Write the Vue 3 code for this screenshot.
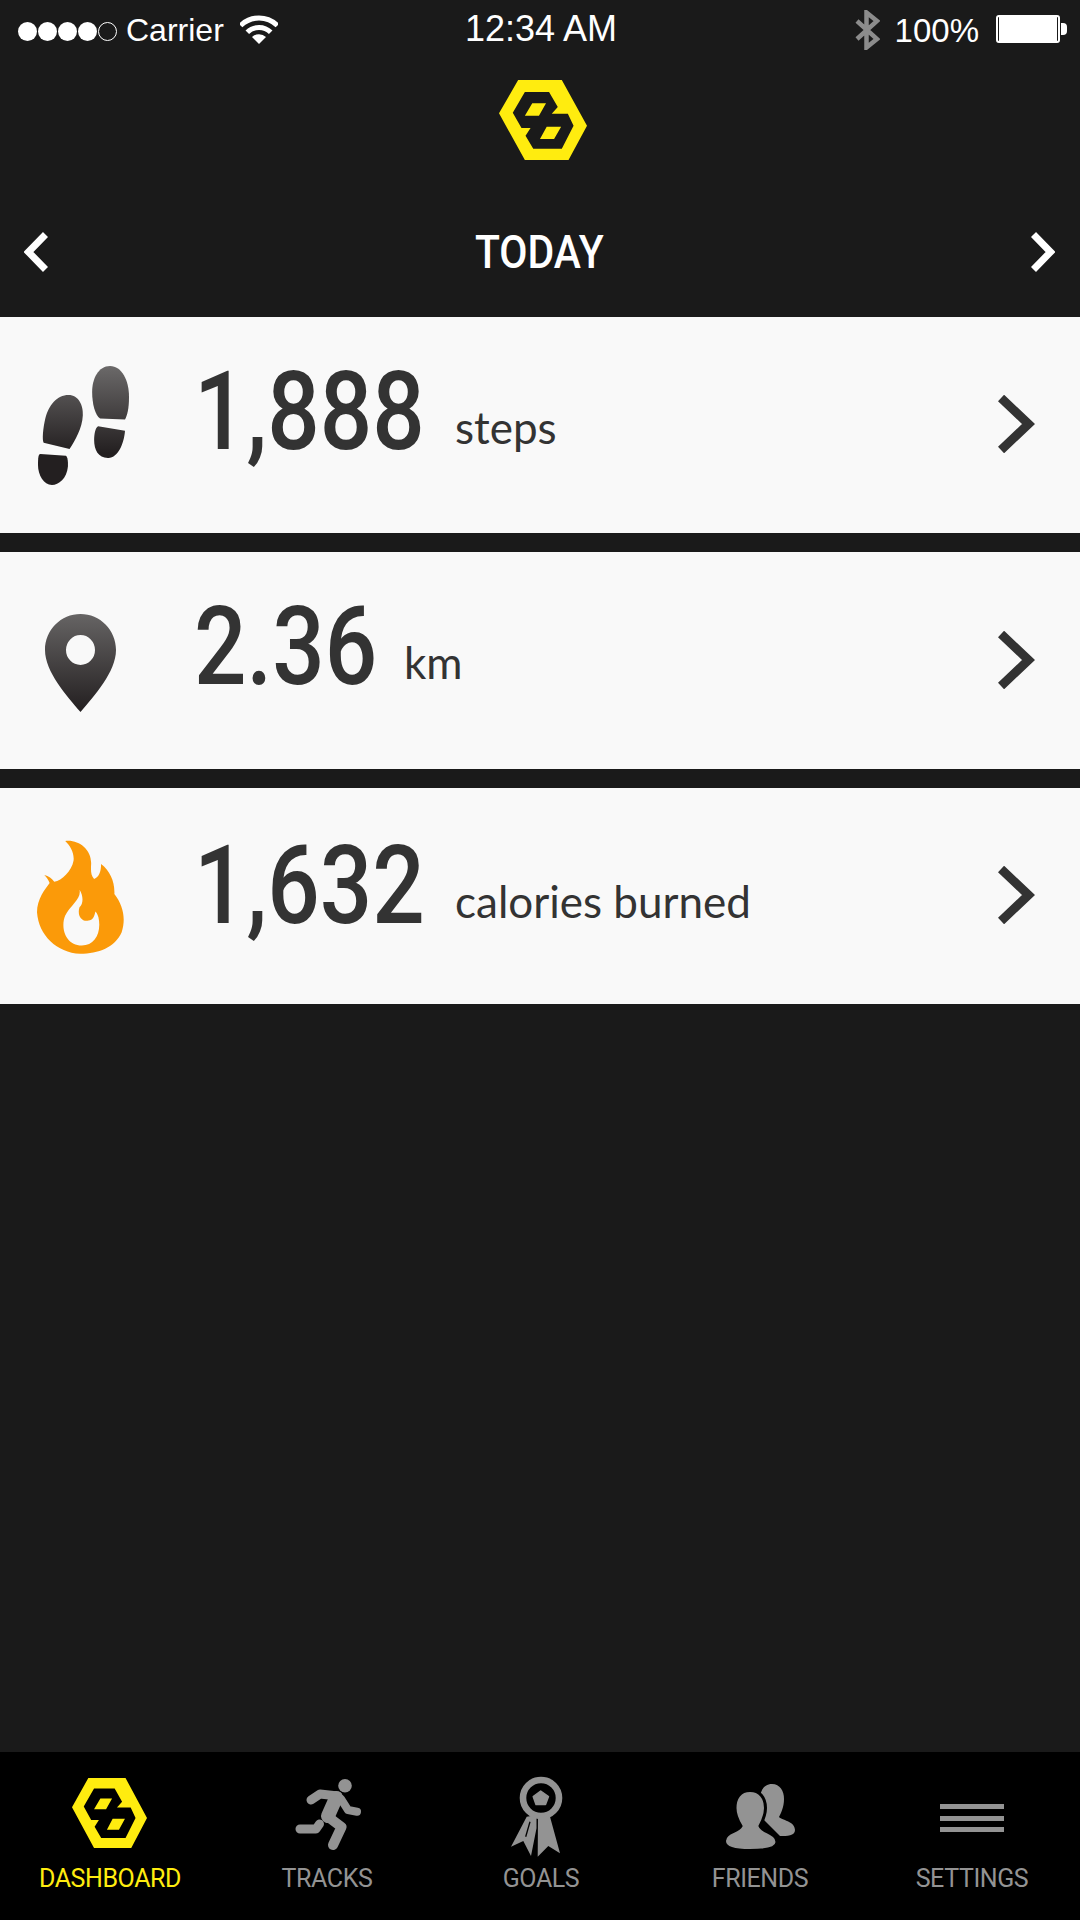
<script setup>
const logoPath =
  "M115 60L245 60L320 197L265 300L135 300L58 160Z" +
  "M135 96L99 158L125 204L152 204L137 227L160 266L245 266L280 197L263 161L215 161L233 141L207 96Z" +
  "M157 130L198 130L177 167L135 167Z" +
  "M200 200L243 200L222 237L180 237Z"

const rows = [
  { icon: "steps", value: "1,888", unit: "steps", valueWidth: 261, cls: "" },
  { icon: "pin", value: "2.36", unit: "km", valueWidth: 210, cls: "" },
  { icon: "flame", value: "1,632", unit: "calories burned", valueWidth: 261, cls: "row-low" }
]
</script>

<template>
  <div class="app">
    <div class="status">
      <div class="status-left">
        <div class="signal">
          <span class="dot"></span>
          <span class="dot"></span>
          <span class="dot"></span>
          <span class="dot"></span>
          <span class="dot dot-empty"></span>
        </div>
        <span class="carrier">Carrier</span>
        <svg class="wifi" viewBox="242 15 38 29" width="38" height="29">
          <path d="M242.6 25.6A26 26 0 0 1 279.4 25.6M249.3 32.3A16.5 16.5 0 0 1 272.7 32.3" fill="none" stroke="#fff" stroke-width="5" />
          <path d="M261 44L254 37A10 10 0 0 1 268 37Z" fill="#fff" />
        </svg>
      </div>
      <div class="time">12:34 AM</div>
      <div class="status-right">
        <svg class="bt" viewBox="855 10 25 40" width="25" height="40">
          <path d="M857 21L877 39L866.5 47.5V12.5L877 21L857 39" fill="none" stroke="#8c8c8c" stroke-width="4.5" />
        </svg>
        <span class="percent">100%</span>
        <div class="battery">
          <div class="battery-body"><div class="battery-fill"></div></div>
          <div class="battery-tip"></div>
        </div>
      </div>
    </div>

    <svg class="logo" viewBox="58 60 262 240" preserveAspectRatio="none">
      <path :d="logoPath" fill-rule="evenodd" fill="#ffec0f" />
    </svg>

    <div class="nav">
      <svg width="24" height="40" viewBox="0 0 24 40">
        <path d="M21.5 2.5L4.5 20L21.5 37.5" fill="none" stroke="#fff" stroke-width="7" />
      </svg>
      <span class="title">TODAY</span>
      <svg width="24" height="40" viewBox="0 0 24 40">
        <path d="M2.5 2.5L19.5 20L2.5 37.5" fill="none" stroke="#fff" stroke-width="7" />
      </svg>
    </div>

    <div class="rows">
      <div v-for="row in rows" :key="row.icon" class="row" :class="row.cls">
        <div class="row-icon">
          <svg v-if="row.icon === 'steps'" class="icon-steps" width="91" height="119" viewBox="53 47 274 358">
            <defs>
              <linearGradient id="stepsGrad" gradientUnits="userSpaceOnUse" x1="0" y1="47" x2="0" y2="310">
                <stop offset="0" stop-color="#6b6969" />
                <stop offset="1" stop-color="#231f20" />
              </linearGradient>
            </defs>
            <g fill="url(#stepsGrad)">
              <path d="M270 47C305 47 327 90 327 140C327 175 322 195 315 208L240 205C225 195 216 160 216 125C216 85 235 47 270 47Z" />
              <path d="M234 228L315 242C312 280 295 323 265 324C235 325 222 300 222 270C222 250 226 232 234 228Z" />
              <path d="M145 134C175 134 190 165 188 195C186 235 165 270 148 297L70 278C65 270 68 235 75 205C85 165 110 134 145 134Z" />
              <path d="M60 312L137 317C142 320 144 335 143 350C140 385 115 405 95 405C70 405 53 375 53 345C53 325 54 312 60 312Z" />
            </g>
          </svg>
          <svg v-else-if="row.icon === 'pin'" class="icon-pin" width="71" height="98" viewBox="45 614 71 98">
            <defs>
              <linearGradient id="pinGrad" gradientUnits="userSpaceOnUse" x1="0" y1="614" x2="0" y2="712">
                <stop offset="0" stop-color="#666464" />
                <stop offset="1" stop-color="#231f20" />
              </linearGradient>
            </defs>
            <path
              fill="url(#pinGrad)"
              fill-rule="evenodd"
              d="M80.5 614C100 614 116 630 116 650C116 672 94 696 80.5 712C67 696 45 672 45 650C45 630 61 614 80.5 614ZM80.5 635A14.5 15 0 0 0 80.5 665A14.5 15 0 0 0 80.5 635Z"
            />
          </svg>
          <svg v-else class="icon-flame" width="87" height="115" viewBox="50 30 262 345">
            <path
              fill="#fb9a09"
              fill-rule="evenodd"
              d="M135 35C175 30 215 60 213 105C212 125 212 140 222 150C238 145 243 125 243 105C270 125 285 160 283 195C310 230 318 270 305 310C285 355 235 375 180 375C110 372 55 320 50 250C50 210 75 180 88 162C85 155 80 145 72 138C85 140 95 150 102 158C125 155 155 125 160 95C163 70 150 50 135 35ZM178 182C185 210 150 230 135 260C120 295 135 350 185 350C225 350 245 310 235 265C232 255 228 250 226 248C222 265 218 275 205 275C185 280 170 260 178 235C190 225 190 200 178 182Z"
            />
          </svg>
        </div>
        <div class="row-text">
          <span class="value" :style="{ width: row.valueWidth + 'px' }">
            <span class="value-num">{{ row.value }}</span>
          </span>
          <span class="unit">{{ row.unit }}</span>
        </div>
        <svg class="row-chevron" width="37" height="58" viewBox="0 0 37 58">
          <path d="M3 3L30.5 29L3 55" fill="none" stroke="#333" stroke-width="9" />
        </svg>
      </div>
    </div>

    <div class="tabs">
      <div class="tab tab-active">
        <div class="tab-icon">
          <svg class="tab-logo" viewBox="58 60 262 240" preserveAspectRatio="none">
            <path :d="logoPath" fill-rule="evenodd" fill="#ffec0f" />
          </svg>
        </div>
        <span class="tab-label">DASHBOARD</span>
      </div>
      <div class="tab">
        <div class="tab-icon">
          <svg width="90" height="84" viewBox="282 1775 90 84">
            <circle cx="345" cy="1785.7" r="6.8" fill="#939393" />
            <g fill="none" stroke="#939393" stroke-width="9" stroke-linecap="round" stroke-linejoin="round">
              <path d="M311 1800L320 1794L338 1796" />
              <path d="M341 1799L348 1810L357 1811.7" stroke-width="8" />
              <path d="M327 1816L341.5 1827L333 1845" stroke-width="10" />
              <path d="M319.5 1824L316 1829L300 1829" />
              <path d="M336 1798L328 1816" stroke-width="14" />
            </g>
          </svg>
        </div>
        <span class="tab-label">TRACKS</span>
      </div>
      <div class="tab">
        <div class="tab-icon">
          <svg width="90" height="84" viewBox="496 1775 90 84">
            <circle cx="541" cy="1798" r="18" fill="none" stroke="#939393" stroke-width="6.6" />
            <path d="M540.7 1791L548.5 1796.5L545.5 1804.5H536L533.2 1796.5Z" fill="#939393" stroke="#939393" stroke-width="1.5" stroke-linejoin="round" />
            <path d="M526.7 1816.7L511 1846.7L523.3 1841L531 1856L536.5 1828.3L536.5 1815Z" fill="#939393" />
            <path d="M538 1815L537.7 1856.7L548.3 1846L560 1853.3L550 1816.7Z" fill="#939393" />
            <path d="M530 1821.7L525.7 1836.7" stroke="#000" stroke-width="1.3" />
          </svg>
        </div>
        <span class="tab-label">GOALS</span>
      </div>
      <div class="tab">
        <div class="tab-icon">
          <svg width="90" height="84" viewBox="715 1775 90 84">
            <path
              fill="#939393"
              d="M772 1784C780 1784 784 1791 784 1799C784 1807 781 1813 779 1817C781 1820 795 1821 795 1830C795 1836 787 1836 780 1836L764 1820C760 1812 760 1805 760 1799C760 1791 764 1784 772 1784Z"
            />
            <path
              fill="#939393"
              stroke="#000"
              stroke-width="3"
              d="M750 1790.5C760 1790.5 765.5 1798 765.5 1808C765.5 1816 762 1822 760 1826C762 1832 777 1833 777 1842C777 1849 764 1850.5 750 1850.5C737 1850.5 724.5 1849 724.5 1841C724.5 1832 738 1832 741 1826C738 1821 735 1816 735 1808C735 1798 740 1790.5 750 1790.5Z"
            />
          </svg>
        </div>
        <span class="tab-label">FRIENDS</span>
      </div>
      <div class="tab">
        <div class="tab-icon">
          <svg width="90" height="84" viewBox="927 1775 90 84">
            <path d="M940 1804H1004V1809H940ZM940 1816H1004V1821H940ZM940 1827H1004V1832H940Z" fill="#939393" />
          </svg>
        </div>
        <span class="tab-label">SETTINGS</span>
      </div>
    </div>
  </div>
</template>

<style scoped>
.app {
  width: 1080px;
  height: 1920px;
  background: #1a1a1a;
  display: flex;
  flex-direction: column;
  overflow: hidden;
  font-family: "Liberation Sans", Arial, sans-serif;
}

.status {
  height: 57px;
  display: grid;
  grid-template-columns: 1fr auto 1fr;
  color: #fff;
}

.status-left {
  display: flex;
  align-items: flex-start;
  padding-left: 18px;
}

.signal {
  display: flex;
  gap: 1px;
  margin-top: 22px;
}

.dot {
  width: 19px;
  height: 19px;
  border-radius: 50%;
  background: #fff;
  box-sizing: border-box;
}

.dot-empty {
  background: none;
  border: 1.5px solid #fff;
}

.carrier {
  font-size: 32px;
  line-height: 32px;
  margin-top: 14px;
  margin-left: 9px;
}

.wifi {
  margin-top: 15px;
  margin-left: 16px;
}

.time {
  font-size: 36px;
  line-height: 36px;
  margin-top: 11px;
  margin-left: 2px;
}

.status-right {
  display: flex;
  align-items: flex-start;
  justify-content: flex-end;
  padding-right: 13px;
}

.bt {
  margin-top: 10px;
}

.percent {
  font-size: 33px;
  line-height: 33px;
  margin-top: 14px;
  margin-left: 15px;
}

.battery {
  display: flex;
  align-items: center;
  margin-top: 15px;
  margin-left: 17px;
}

.battery-body {
  width: 64px;
  height: 28px;
  box-sizing: border-box;
  border: 2px solid #fff;
  border-radius: 3px;
  padding: 0 1px;
}

.battery-fill {
  height: 100%;
  background: #fff;
}

.battery-tip {
  width: 6px;
  height: 12px;
  margin-left: 1px;
  background: #fff;
  border-radius: 0 4px 4px 0;
}

.logo {
  width: 88px;
  height: 80px;
  margin: 23px 0 0 499px;
}

.nav {
  height: 40px;
  margin-top: 72px;
  padding: 0 25px 0 24px;
  display: flex;
  align-items: center;
  justify-content: space-between;
}

.title {
  font-family: Roboto, sans-serif;
  font-weight: 500;
  font-size: 46px;
  line-height: 40px;
  color: #fff;
  transform: scaleX(0.89);
}

.rows {
  margin-top: 45px;
  display: flex;
  flex-direction: column;
  gap: 19px;
}

.row {
  height: 216.4px;
  background: #f9f9f9;
  display: flex;
  align-items: center;
  padding: 0 45px 0 37px;
}

.row-icon {
  width: 87px;
  height: 120px;
  flex: none;
  margin-right: 70px;
  display: flex;
  align-items: center;
  justify-content: center;
}

.row-icon svg {
  flex: none;
}

.icon-steps {
  margin-left: 6px;
}

.icon-pin {
  margin-top: 5px;
}

.icon-flame {
  margin-top: 1px;
}

.row-text {
  align-self: flex-start;
  margin-top: 40px;
  display: flex;
  align-items: baseline;
  color: #333;
  white-space: nowrap;
}

.row-low .row-text {
  margin-top: 43px;
}

.value {
  display: block;
  flex: none;
}

.value-num {
  display: inline-block;
  font-family: Roboto, sans-serif;
  font-weight: 500;
  font-size: 110px;
  line-height: 110px;
  transform: scaleX(0.84);
  transform-origin: 0 50%;
}

.unit {
  font-family: Lato, sans-serif;
  font-size: 44px;
  position: relative;
  top: -5px;
}

.row-chevron {
  margin-left: auto;
  margin-bottom: 2px;
}

.tabs {
  margin-top: auto;
  height: 168px;
  background: #000;
  box-sizing: border-box;
  padding-top: 23px;
  display: grid;
  grid-template-columns: 220px 214px 214px 224px 200px;
  color: #939393;
}

.tab {
  display: flex;
  flex-direction: column;
  align-items: center;
}

.tab-active {
  color: #ffec0f;
}

.tab-icon {
  width: 90px;
  height: 84px;
  display: flex;
  justify-content: center;
  align-items: flex-start;
}

.tab-logo {
  width: 75px;
  height: 70px;
  margin: 3px 2px 0 0;
}

.tab-label {
  font-family: Roboto, sans-serif;
  font-size: 25px;
  line-height: 30px;
  letter-spacing: -0.4px;
  margin-top: 5px;
}
</style>
